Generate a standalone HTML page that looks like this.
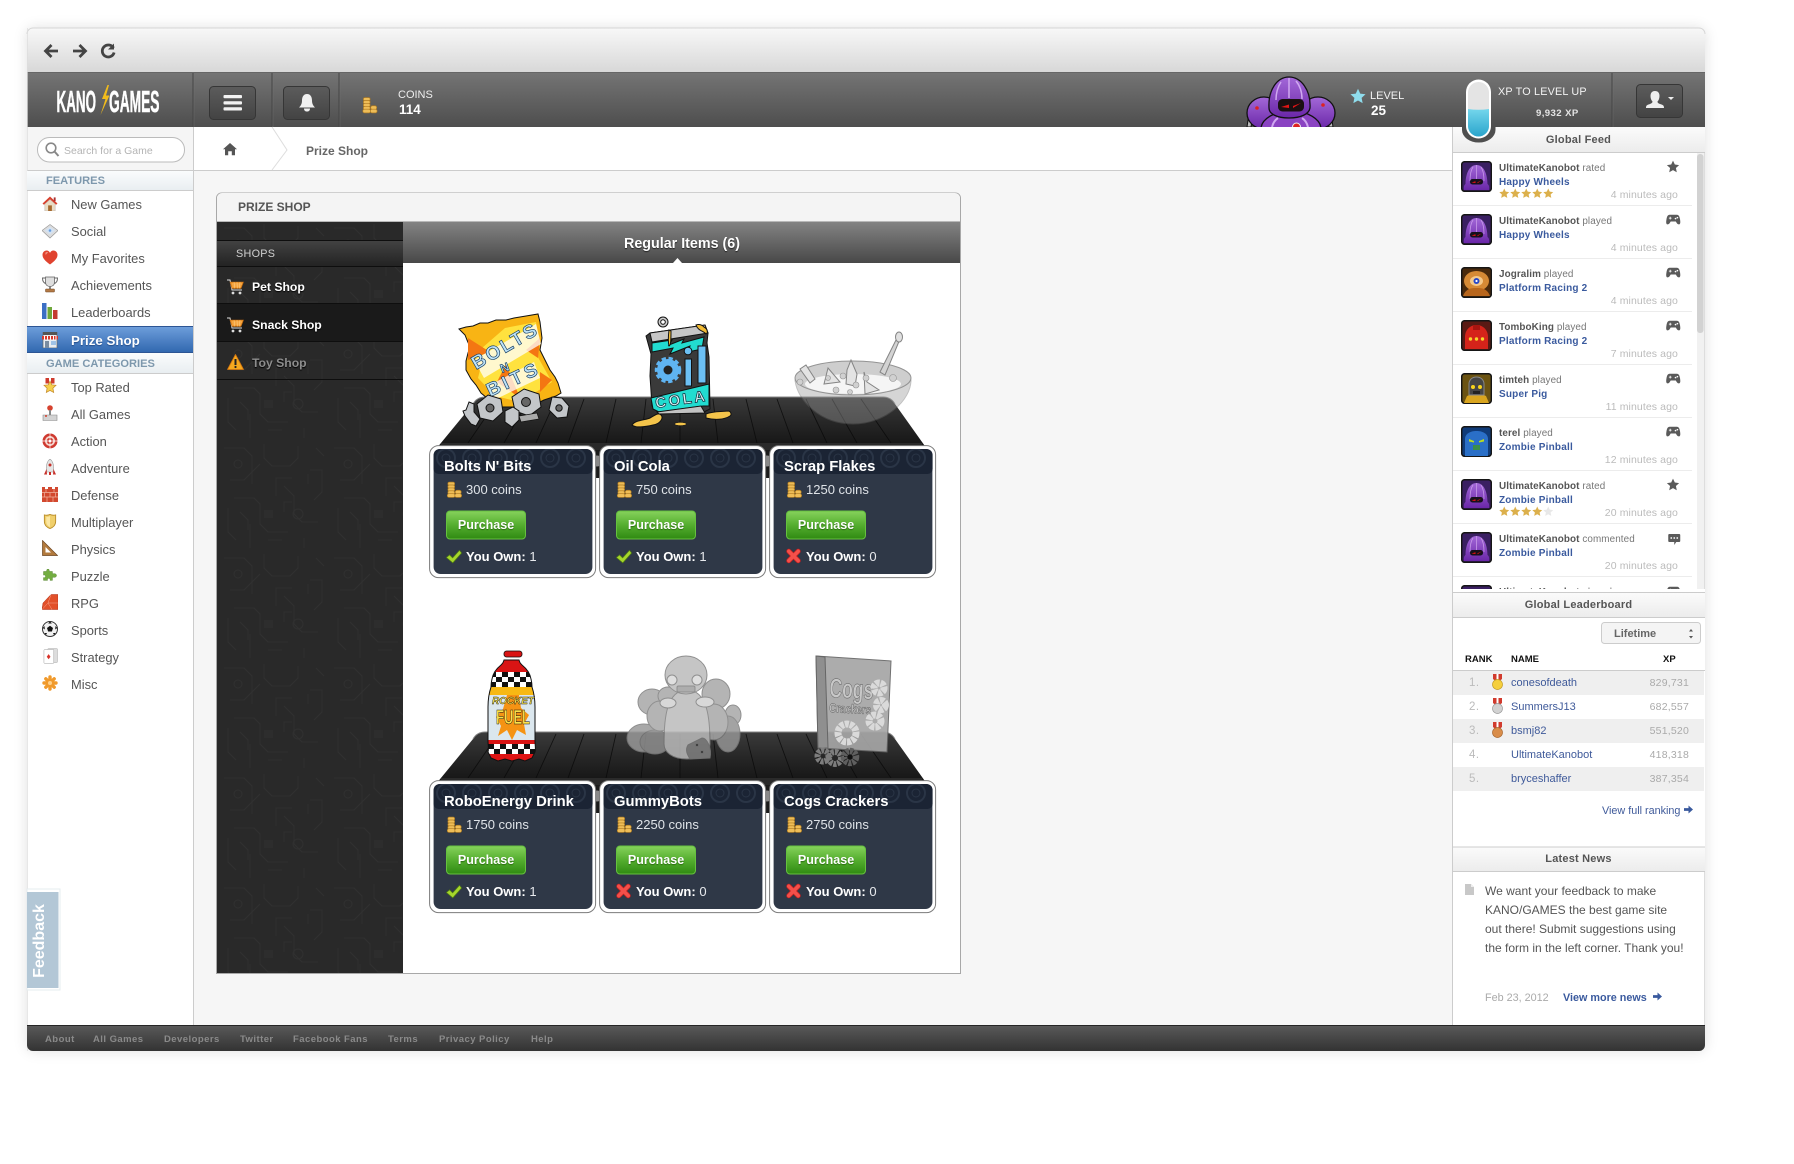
<!DOCTYPE html>
<html><head><meta charset="utf-8"><title>Prize Shop</title>
<style>
html,body{margin:0;padding:0;background:#fff;width:1794px;height:1164px;overflow:hidden}
body{position:relative;font-family:"Liberation Sans",Arial,sans-serif}
#win{position:absolute;left:27px;top:28px;width:1678px;height:1023px;border-radius:7px;box-shadow:0 0 14px rgba(0,0,0,.13)}
svg#g{position:absolute;left:0;top:0}
.t{position:absolute;white-space:nowrap;line-height:20px;font-size:12px;color:#555}
.m{font-size:12.9px;left:71px;color:#555}
.h{font-size:11.1px;font-weight:bold;color:#7e98ad;left:46px}
.w{color:#fff;font-weight:bold}
.s{font-size:12.2px;font-weight:bold;left:252px;color:#fff;text-shadow:0 1px 1px #000}
.ti{font-size:14.8px;font-weight:bold;color:#fff}
.pr{font-size:13px;color:#dfe3e8}
.pu{font-size:12.5px;font-weight:bold;color:#fff;width:80px;text-align:center;text-shadow:0 1px 1px #2a6b10}
.ow{font-size:13px;color:#e8eaee}.ow b{color:#fff}
.f1{font-size:9.9px;left:1499px;color:#777;letter-spacing:.1px}.f1 b{color:#555}
.f2{font-size:10px;left:1499px;font-weight:bold;color:#3a5a9e;letter-spacing:.2px}
.f3{font-size:10.5px;right:116px;color:#bbb;letter-spacing:.1px}
.sh{font-size:11px;font-weight:bold;color:#555;width:253px;left:1452px;text-align:center;letter-spacing:.2px}
.rk{font-size:11.5px;left:1469px;color:#bbb;letter-spacing:.5px}
.nm{font-size:11px;left:1511px;color:#3f5a9a}
.xp{font-size:10.5px;right:105px;color:#aaa;letter-spacing:.2px}
.th{font-size:9.5px;font-weight:bold;color:#111}
.nw{font-size:12px;left:1485px;color:#555}
.ft{font-size:9.5px;font-weight:bold;color:#8a8a8a;letter-spacing:.45px}
</style></head><body>
<div id="win"></div>
<svg id="g" width="1794" height="1164" viewBox="0 0 1794 1164" xmlns="http://www.w3.org/2000/svg">
<defs>
<linearGradient id="gBar" x1="0" y1="0" x2="0" y2="1"><stop offset="0" stop-color="#f8f8f8"/><stop offset="1" stop-color="#d8d8d8"/></linearGradient>
<linearGradient id="gHdr" x1="0" y1="0" x2="0" y2="1"><stop offset="0" stop-color="#747474"/><stop offset="1" stop-color="#4e4e4e"/></linearGradient>
<linearGradient id="gSec" x1="0" y1="0" x2="0" y2="1"><stop offset="0" stop-color="#fbfbfb"/><stop offset="1" stop-color="#ececec"/></linearGradient>
<linearGradient id="gCat" x1="0" y1="0" x2="0" y2="1"><stop offset="0" stop-color="#fafcfd"/><stop offset="1" stop-color="#e9eef1"/></linearGradient>
<linearGradient id="gBlue" x1="0" y1="0" x2="0" y2="1"><stop offset="0" stop-color="#6f9fdc"/><stop offset="1" stop-color="#2f66ae"/></linearGradient>
<linearGradient id="gBtn" x1="0" y1="0" x2="0" y2="1"><stop offset="0" stop-color="#86d25c"/><stop offset=".5" stop-color="#55ae2f"/><stop offset="1" stop-color="#2f8a12"/></linearGradient>
<linearGradient id="gShops" x1="0" y1="0" x2="0" y2="1"><stop offset="0" stop-color="#424242"/><stop offset="1" stop-color="#232323"/></linearGradient>
<linearGradient id="gReg" x1="0" y1="0" x2="0" y2="1"><stop offset="0" stop-color="#838383"/><stop offset="1" stop-color="#484848"/></linearGradient>
<linearGradient id="gShelf" x1="0" y1="0" x2="0" y2="1"><stop offset="0" stop-color="#3b3b3b"/><stop offset=".5" stop-color="#262626"/><stop offset="1" stop-color="#141414"/></linearGradient>
<linearGradient id="gFoot" x1="0" y1="0" x2="0" y2="1"><stop offset="0" stop-color="#5a5a5a"/><stop offset="1" stop-color="#333"/></linearGradient>
<linearGradient id="gBtnD" x1="0" y1="0" x2="0" y2="1"><stop offset="0" stop-color="#5c5c5c"/><stop offset="1" stop-color="#434343"/></linearGradient>
<linearGradient id="gXp" x1="0" y1="0" x2="0" y2="1"><stop offset="0" stop-color="#74d6ec"/><stop offset="1" stop-color="#2aa5cc"/></linearGradient>
<linearGradient id="gPur" x1="0" y1="0" x2="0" y2="1"><stop offset="0" stop-color="#a368d8"/><stop offset="1" stop-color="#6a27a8"/></linearGradient>
<pattern id="circ" width="110" height="110" patternUnits="userSpaceOnUse">
<rect width="110" height="110" fill="#292929"/>
<path d="M4 8h20l8 8v16l-8 8H10M44 4v14l8 8h18l8-8V6M14 58h20l6 6v20l8 8h20M64 46l10 10v18l8 8h16M8 68v24l8 8M30 108V84M56 56V38h16M90 30h12v22l-8 8M40 24l-8 8v12M84 108v-10M96 8l8 8M72 62h-8v10M20 72l8 8v10M48 100h14M88 44v-10" fill="none" stroke="#303030" stroke-width="1"/>
<circle cx="18" cy="24" r="4" fill="none" stroke="#303030"/><circle cx="78" cy="74" r="5" fill="none" stroke="#303030"/><rect x="44" y="70" width="9" height="8" fill="#2d2d2d"/>
</pattern>
<clipPath id="cHead"><rect x="1200" y="60" width="200" height="67"/></clipPath>
<clipPath id="cFeed"><rect x="1452" y="152" width="253" height="437"/></clipPath>
<clipPath id="cBand"><path d="M4.6 10a6 6 0 0 1 6-6h147a6 6 0 0 1 6 6v14a5 5 0 0 1-5 5H9.6a5 5 0 0 1-5-5z"/></clipPath>
<clipPath id="cBot"><path id="botP" d="M504 660c-1 3-1 3-3 5-5 4-8 8-9 14-1 4-1 6-1 8-2 6-3 12-3 20v34c0 4 1 8 0 11l3 6 7 3 7-2 7 2 7-2 6 2 7-3 3-6c1-3 0-7 0-11v-34c0-8-1-14-3-20 0-2 0-4-1-8-1-6-4-10-9-14-2-2-2-2-3-5z"/></clipPath>

<symbol id="star" viewBox="0 0 20 20"><path d="M10 1l2.8 6 6.6.8-4.9 4.5 1.3 6.6L10 15.6 4.2 18.9l1.3-6.6L.6 7.8 7.2 7z"/></symbol>
<symbol id="coin" viewBox="0 0 16 17"><g fill="#eebd58" stroke="#b07a1e" stroke-width=".7"><rect x="1.4" y=".6" width="7" height="3.4" rx="1.7"/><rect x="1.4" y="3.6" width="7" height="3.4" rx="1.7"/><rect x="1.4" y="6.6" width="7" height="3.4" rx="1.7"/><rect x="1.4" y="9.6" width="7" height="3.4" rx="1.7"/><rect x=".8" y="12.6" width="8" height="3.8" rx="1.9"/><rect x="9" y="9" width="6.2" height="3.8" rx="1.9"/><rect x="8.6" y="12.6" width="7" height="3.8" rx="1.9"/></g></symbol>
<symbol id="chk" viewBox="0 0 16 14"><path d="M.4 8l3.200-2.600 3 3L13.500.8l2.100 2.700L6.800 13.400z" fill="#a6d62c" stroke="#4f7d12" stroke-width=".7"/></symbol>
<symbol id="xx" viewBox="0 0 16 16"><path d="M3 3l10 10M13 3L3 13" stroke="#c51f1f" stroke-width="5.400" stroke-linecap="round"/><path d="M3 3l10 10M13 3L3 13" stroke="#f4504a" stroke-width="3.800" stroke-linecap="round"/></symbol>
<symbol id="pad" viewBox="0 0 16 12"><path d="M4 .8h8c2 0 2.900 2 3.400 5s.5 5.200-1 5.500-2.500-1-3.600-3.100H5.200C4.100 10.300 3.100 11.600 1.600 11.300S.1 8.800.6 5.800 2 .8 4 .8z" fill="#5a5a5a"/><path d="M3.200 4.500h3M4.700 3v3" stroke="#fff" stroke-width=".9"/><circle cx="10.500" cy="5" r=".9" fill="#fff"/><circle cx="12.500" cy="4" r=".9" fill="#fff"/></symbol>
<symbol id="bub" viewBox="0 0 12 11"><path d="M1 0h10a1 1 0 0 1 1 1v6a1 1 0 0 1-1 1H8l-2 3V8H1a1 1 0 0 1-1-1V1a1 1 0 0 1 1-1z" fill="#5a5a5a"/><circle cx="3" cy="4" r=".9" fill="#fff"/><circle cx="6" cy="4" r=".9" fill="#fff"/><circle cx="9" cy="4" r=".9" fill="#fff"/></symbol>
<symbol id="arr" viewBox="0 0 10 10"><path d="M0 3.500h5V.5L10 5 5 9.500v-3H0z" fill="#3a5a9e"/></symbol>
<symbol id="cart" viewBox="0 0 17 16"><path d="M0 1h3l2 10h10" fill="none" stroke="#ddd" stroke-width="1"/><path d="M3 3h13.500l-2.500 6.500H5z" fill="#f0962a" stroke="#b9650f" stroke-width=".6"/><path d="M5 5h10M5.500 7h8.500M7 3l.8 6.500M10 3l.3 6.500M13 3l-.6 6.500" stroke="#ffd28a" stroke-width=".5"/><circle cx="6" cy="14" r="1.400" fill="#ddd"/><circle cx="13" cy="14" r="1.400" fill="#ddd"/></symbol>
<symbol id="warn" viewBox="0 0 17 16"><path d="M8.500.5L16.500 15.500H.5z" fill="#f5a81f" stroke="#d9780e" stroke-width=".8" stroke-linejoin="round"/><path d="M8.500 5v6" stroke="#222" stroke-width="2"/><circle cx="8.500" cy="13" r="1.100" fill="#222"/></symbol>

<symbol id="iHome" viewBox="0 0 16 16"><path d="M8 .5L16 8l-1.500 1.300L8 3.500 1.500 9.300 0 8z" fill="#d8402c"/><path d="M2.500 8.500L8 3.800l5.500 4.700V16h-11z" fill="#e9dcc4" stroke="#a99" stroke-width=".4"/><rect x="6" y="10" width="4" height="6" fill="#a5682d"/><rect x="12" y="1.500" width="2" height="4" fill="#a33"/></symbol>
<symbol id="iSoc" viewBox="0 0 16 16"><path d="M8 1.500l8 6L8 15 0 7.500z" fill="#dcdcdc" stroke="#999" stroke-width=".7"/><path d="M8 4l5 3.500L8 11.500 3 7.500z" fill="#d3e2f3"/><circle cx="8" cy="7.500" r="1.300" fill="#6a9fdf"/></symbol>
<symbol id="iHeart" viewBox="0 0 16 16"><path d="M8 15.500C3 11.500 0 9 0 5c0-2.500 2-4.500 4.300-4.500C6 .5 7.300 1.500 8 3c.7-1.500 2-2.500 3.700-2.500C14 .5 16 2.500 16 5c0 4-3 6.500-8 10.500z" fill="#e0432f"/><path d="M3 3c1-1 2.500-1 3 0-1 .2-2 1-2.500 2.500z" fill="#f29a8a"/></symbol>
<symbol id="iTro" viewBox="0 0 16 16"><path d="M3.500.5h9v5c0 3-2 4.500-4.500 4.500S3.500 8.500 3.500 5.500z" fill="#dedede" stroke="#666" stroke-width=".8"/><path d="M3.500 1.500H.5c0 3 1 5 3.500 5.500M12.500 1.500h3c0 3-1 5-3.500 5.500" fill="none" stroke="#666"/><rect x="7" y="10" width="2" height="2.500" fill="#888"/><rect x="3.500" y="12.500" width="9" height="3" rx=".5" fill="#b47a45" stroke="#6d4420" stroke-width=".5"/></symbol>
<symbol id="iBars" viewBox="0 0 16 16"><rect x="0" y="0" width="4.500" height="16" fill="#3c6fc4"/><rect x="5.500" y="4" width="4.500" height="12" fill="#6fa83b"/><rect x="11" y="7" width="4.500" height="9" fill="#c43b30"/></symbol>
<symbol id="iShop" viewBox="0 0 16 16"><rect x="1" y="0" width="14" height="16" fill="#e9edf2" stroke="#666" stroke-width=".7"/><rect x="1" y="0" width="14" height="3" fill="#555"/><path d="M0 4h16v3.500H0z" fill="#d93a2c"/><path d="M2.500 4v3.500M5.500 4v3.500M8.500 4v3.500M11.500 4v3.500M14 4v3.500" stroke="#fff"/><rect x="3" y="9" width="4" height="7" fill="#7a8ca0"/><rect x="9" y="9" width="5" height="4" fill="#9fc2e6"/></symbol>
<symbol id="iMed" viewBox="0 0 16 16"><rect x="3.500" y="0" width="9" height="5.500" fill="#cf3b2c"/><path d="M7 0h2v5H7z" fill="#fff"/><path d="M8 3l1.700 3.800 4.300.5-3.100 2.900.8 4.300L8 12.400 4.300 14.500l.8-4.300L2 7.300l4.300-.5z" fill="#f6cf4c" stroke="#c2872a" stroke-width=".7"/></symbol>
<symbol id="iJoy" viewBox="0 0 16 16"><circle cx="8" cy="3" r="2.800" fill="#d6422f"/><rect x="7" y="5" width="2" height="5" fill="#888"/><path d="M1 10h14v5.500H1z" fill="#d3d3d3" stroke="#888" stroke-width=".6"/><circle cx="4" cy="11" r="1" fill="#d6422f"/></symbol>
<symbol id="iTgt" viewBox="0 0 16 16"><circle cx="8" cy="8" r="7.500" fill="#cf3a30"/><circle cx="8" cy="8" r="5" fill="#f4d8d0"/><circle cx="8" cy="8" r="3.200" fill="#cf3a30"/><circle cx="8" cy="8" r="1.300" fill="#fff"/><path d="M8 0v16M0 8h16" stroke="#fff" stroke-width=".7"/></symbol>
<symbol id="iRkt" viewBox="0 0 16 16"><path d="M8 0c2.500 2 3.500 5 3.500 8v5h-7V8C4.500 5 5.500 2 8 0z" fill="#e6e6e6" stroke="#999" stroke-width=".6"/><circle cx="8" cy="6" r="1.500" fill="#c8312a"/><path d="M4.500 10L2 15.500h3zM11.500 10l2.500 5.500h-3zM7 13h2v3H7z" fill="#c8312a"/></symbol>
<symbol id="iBrk" viewBox="0 0 16 16"><path d="M0 0h3v2h3V0h4v2h3V0h3v15H0z" fill="#d2492f"/><path d="M0 5.500h16M0 10h16M4 2v3.500M12 2v3.500M8 5.500V10M2.500 5.500V10M13.500 5.500V10M5 10v5M11 10v5" stroke="#f1b39e" stroke-width=".7"/></symbol>
<symbol id="iShd" viewBox="0 0 16 16"><path d="M2 1c2 .5 4 .5 6-.5 2 1 4 1 6 .5v7c0 4-3 6.500-6 7.500-3-1-6-3.500-6-7.500z" fill="#f0cf6b" stroke="#bb8f2c"/><path d="M8 2v12c-2-1-4-3-4-6V3c1.500.2 3 0 4-1z" fill="#fbe7a3"/></symbol>
<symbol id="iTri" viewBox="0 0 16 16"><path d="M.5.500L15.500 15.500H.5z" fill="#b27a3d" stroke="#6d4520" stroke-width=".7"/><path d="M3.500 7l5.500 5.500H3.500z" fill="#fff"/></symbol>
<symbol id="iPuz" viewBox="0 0 16 16"><path d="M0 3h4c-.5-2 .5-3 1.500-3S7.500 1 7 3h4v3c2-.5 5-.5 5 2s-3 2.500-5 2v4H8c.5-2-.5-2.500-1.500-2.500S4.500 12 5 14H0v-3.500c1.500.5 2.500 0 2.500-1.500S1.500 7 0 7.500z" fill="#73ad41" stroke="#4c7a26" stroke-width=".5"/></symbol>
<symbol id="iGem" viewBox="0 0 16 16"><path d="M1 9L9 .5h7V15.500H0z" fill="#e2502a" stroke="#a92a12" stroke-width=".5"/><path d="M9 .5L6 9h10M6 9l-6 6.500M6 9l4 6.500" stroke="#f5a38b" stroke-width=".5" fill="none"/></symbol>
<symbol id="iBall" viewBox="0 0 16 16"><circle cx="8" cy="8" r="7.500" fill="#f1f1f1" stroke="#333"/><path d="M8 4.800l3 2.200-1.100 3.500H6.100L5 7z" fill="#111"/><path d="M8 .5L6.200 2.500h3.600zM.8 7l2 1.500L2.500 5zM15.200 7l-2 1.500.3-3.500zM4 14l1-2H2.500zM12 14l-1-2h2.500z" fill="#111"/></symbol>
<symbol id="iCrd" viewBox="0 0 16 16"><rect x="5" y="0" width="10.500" height="15" rx="1" fill="#ddd" stroke="#aaa" stroke-width=".5"/><rect x="1" y="1" width="10.500" height="15" rx="1" fill="#fff" stroke="#999" stroke-width=".5"/><path d="M6 6l2 2.800L6 11.500 4 8.800z" fill="#d8332a"/></symbol>
<symbol id="iMisc" viewBox="0 0 16 16"><g stroke="#f09a2c" stroke-width="3.400" stroke-linecap="round"><path d="M8 2v12M2 8h12M3.800 3.800l8.400 8.400M12.200 3.800l-8.400 8.400"/></g><circle cx="8" cy="8" r="2" fill="#ffd08a"/></symbol>

<symbol id="aP" viewBox="0 0 31 31"><rect x=".7" y=".7" width="29.600" height="29.600" rx="3" fill="#3a1f62" stroke="#161616" stroke-width="1.500"/><path d="M3 29c-.5-3 0-5 1.500-6 .3-11 4-19 11-19s10.700 8 11 19c1.500 1 2 3 1.500 6z" fill="url(#gPur)"/><path d="M12 6c-2 3-3 9-3 14M15.500 4v15M20 6c2 3 3 9 3 14" stroke="#c79ae8" fill="none" stroke-width=".8"/><rect x="9" y="18" width="13" height="5.500" rx="2.500" fill="#16101c"/><path d="M10.500 21.500l4-1.300v1.800zM20.500 19.500l-4 1.800 0 1z" fill="#e11"/></symbol>
<symbol id="aO" viewBox="0 0 31 31"><rect x=".7" y=".7" width="29.600" height="29.600" rx="3" fill="#4a2a0c" stroke="#161616" stroke-width="1.500"/><ellipse cx="15.500" cy="14" rx="12.500" ry="10" fill="#d68a35"/><path d="M2 29c3-8 9-8 13.500-8S26 21 29 29z" fill="#b8661c"/><ellipse cx="15.500" cy="14" rx="6.500" ry="5" fill="#f5c98a"/><circle cx="15.500" cy="14" r="3" fill="#2748c9"/><circle cx="15.500" cy="14" r="1.100" fill="#fff"/></symbol>
<symbol id="aR" viewBox="0 0 31 31"><rect x=".7" y=".7" width="29.600" height="29.600" rx="3" fill="#5a1a14" stroke="#161616" stroke-width="1.500"/><path d="M4 29V17c0-7 5-12 11.500-12S27 10 27 17v12z" fill="#d5231a"/><path d="M12 5h7v5h-7z" fill="#a81510"/><circle cx="9.500" cy="19" r="1.700" fill="#f5d52a"/><circle cx="15.500" cy="19" r="1.700" fill="#f5d52a"/><circle cx="21.500" cy="19" r="1.700" fill="#f5d52a"/></symbol>
<symbol id="aY" viewBox="0 0 31 31"><rect x=".7" y=".7" width="29.600" height="29.600" rx="3" fill="#6b5312" stroke="#161616" stroke-width="1.500"/><path d="M3 30l3-7 5-2h9l5 2 3 7z" fill="#d9a51f"/><path d="M8 22V11c0-4 3-7 7.500-7S23 7 23 11v11z" fill="#454545" stroke="#888"/><circle cx="12" cy="14" r="2" fill="#f7d31d"/><circle cx="19" cy="14" r="2" fill="#f7d31d"/><rect x="12" y="18" width="7" height="3" fill="#222"/></symbol>
<symbol id="aB" viewBox="0 0 31 31"><rect x=".7" y=".7" width="29.600" height="29.600" rx="3" fill="#103b78" stroke="#161616" stroke-width="1.500"/><path d="M4 30V13c0-5 5-8 11.500-8S27 8 27 13v17z" fill="#2a6fc7"/><path d="M8 13l5 2v1.500l-5-1zM23 13l-5 2v1.500l5-1z" fill="#b9dd1f"/><rect x="12" y="19" width="7" height="5" fill="#3b8f49"/></symbol>
<symbol id="mG" viewBox="0 0 11 16"><path d="M1 0h9v5l-3 2.500H4L1 5z" fill="#d13b2e"/><path d="M4.500 0h2v7h-2z" fill="#fff"/><circle cx="5.500" cy="10.500" r="5" fill="#f5cf3c" stroke="#c29a1f" stroke-width=".7"/></symbol>
<symbol id="mS" viewBox="0 0 11 16"><path d="M1 0h9v5l-3 2.500H4L1 5z" fill="#d13b2e"/><path d="M4.500 0h2v7h-2z" fill="#fff"/><circle cx="5.500" cy="10.500" r="5" fill="#d2d2d2" stroke="#999" stroke-width=".7"/></symbol>
<symbol id="mB" viewBox="0 0 11 16"><path d="M1 0h9v5l-3 2.500H4L1 5z" fill="#d13b2e"/><path d="M4.500 0h2v7h-2z" fill="#fff"/><circle cx="5.500" cy="10.500" r="5" fill="#d98d4a" stroke="#a8642a" stroke-width=".7"/></symbol>

<g id="shelf">
<path d="M485 397H883q8 0 12 7L927 449H436L473 404q4-7 12-7z" fill="url(#gShelf)"/>
<path d="M473 404q4-7 12-7H883q8 0 12 7" fill="none" stroke="#858585"/>
<g stroke="#0a0a0a" stroke-width=".9" opacity=".8"><path d="M498 399L468 443M529 399L504 443M556 399L536 443M584 399L568 443M616 399L606 443M646 399L641 443M680 399V443M713 399L718 443M746 399L757 443M777 399L793 443M806 399L827 443M832 399L857 443M861 399L891 443"/></g>
<rect x="441" y="443" width="481" height="8" fill="#2a2a2a"/>
<rect x="592" y="450" width="11" height="28" fill="#1c1c1c"/><rect x="762" y="450" width="11" height="28" fill="#1c1c1c"/>
<circle cx="597" cy="461" r="5.500" fill="#8a8a8a"/><circle cx="767" cy="461" r="5.500" fill="#8a8a8a"/>
</g>
<g id="card">
<rect x=".6" y=".6" width="166" height="132" rx="9" fill="#fff" stroke="#7c7c7c"/>
<rect x="4.600" y="4" width="158.800" height="125" rx="7" fill="#2f3847"/>
<g clip-path="url(#cBand)"><rect x="4" y="4" width="161" height="26" fill="#1b2434"/>
<g fill="none" stroke="#2a3546" stroke-width="2"><circle cx="17" cy="13" r="9"/><circle cx="43" cy="13" r="9"/><circle cx="69" cy="13" r="9"/><circle cx="95" cy="13" r="9"/><circle cx="121" cy="13" r="9"/><circle cx="147" cy="13" r="9"/></g>
<g fill="none" stroke="#2a3546"><circle cx="17" cy="13" r="4"/><circle cx="43" cy="13" r="4"/><circle cx="69" cy="13" r="4"/><circle cx="95" cy="13" r="4"/><circle cx="121" cy="13" r="4"/><circle cx="147" cy="13" r="4"/></g></g>
<use href="#coin" x="17.500" y="36.500" width="15.500" height="16.500"/>
<rect x="17.500" y="66" width="79" height="28" rx="3.500" fill="url(#gBtn)" stroke="#66c13f"/>
</g>
</defs>

<!-- browser chrome -->
<path d="M27 72V34a6 6 0 0 1 6-6H1699a6 6 0 0 1 6 6V72z" fill="url(#gBar)"/>
<path d="M27 34a6 6 0 0 1 6-6H1699a6 6 0 0 1 6 6" fill="none" stroke="#d6d6d6"/>
<rect x="27" y="72" width="1678" height="1.200" fill="#666"/>
<g fill="none" stroke="#444" stroke-width="2.800">
<path d="M58 51H46M51.500 45L45.500 51l6 6"/><path d="M73 51h12M79.500 45l6 6-6 6"/><path d="M113.500 48a6 6 0 1 0 .6 4.500"/></g>
<path d="M114 43.500v6h-6z" fill="#444"/>
<rect x="27" y="73" width="1678" height="54" fill="url(#gHdr)"/>
<g stroke="#454545"><path d="M193 73v54M272 73v54M339 73v54M1612 73v54"/></g>
<g stroke="#7a7a7a" opacity=".3"><path d="M194 73v54M273 73v54M340 73v54M1613 73v54"/></g>
<!-- logo -->
<g font-family="'Liberation Sans',sans-serif" font-weight="bold" fill="#fff" stroke="#fff" stroke-width=".55" font-size="31">
<text x="56.500" y="112" textLength="39.500" lengthAdjust="spacingAndGlyphs">KANO</text>
<text x="109" y="112" textLength="50.500" lengthAdjust="spacingAndGlyphs">GAMES</text></g>
<path d="M107.500 85l-5.500 14h3.500l-5 16 9-19.500h-3.500l3-10.500z" fill="#f2bc1b"/>
<!-- header buttons -->
<rect x="209.500" y="86.500" width="46" height="33" rx="4" fill="url(#gBtnD)" stroke="#363636"/>
<rect x="223.500" y="95" width="18.500" height="3.200" rx="1" fill="#f2f2f2"/><rect x="223.500" y="101.300" width="18.500" height="3.200" rx="1" fill="#f2f2f2"/><rect x="223.500" y="107.300" width="18.500" height="3.200" rx="1" fill="#f2f2f2"/>
<rect x="283.500" y="86.500" width="46" height="33" rx="4" fill="url(#gBtnD)" stroke="#363636"/>
<path d="M307 94c3.500 0 5 3 5 6.500 0 3 1 5 3 7H299c2-2 3-4 3-7 0-3.500 1.500-6.500 5-6.500z" fill="#f0f0f0"/><path d="M304 108.500h6c0 2-1.200 3-3 3s-3-1-3-3z" fill="#f0f0f0"/>
<use href="#coin" x="362" y="97" width="15.500" height="16.500"/>
<!-- robot -->
<g clip-path="url(#cHead)">
<path d="M1247 127l3-20 4 0-3 20zM1333 127l-3-20-4 0 3 20z" fill="#bbb" stroke="#111"/>
<ellipse cx="1264" cy="113" rx="17" ry="16" fill="url(#gPur)" stroke="#111" stroke-width="1.300"/>
<ellipse cx="1318" cy="113" rx="17" ry="16" fill="url(#gPur)" stroke="#111" stroke-width="1.300"/>
<ellipse cx="1291" cy="129" rx="30" ry="18" fill="#8a43c2" stroke="#111" stroke-width="1.300"/>
<path d="M1269 108c-1-18 8-31 20-31s22 13 21 31c-1 6-9 10-21 10s-20-4-20-10z" fill="url(#gPur)" stroke="#111" stroke-width="1.300"/>
<path d="M1281 82c-4 6-5 13-5 18M1296 81c5 6 6 13 6 18M1289 78v20" stroke="#cfa8f0" stroke-width="1.500" fill="none"/>
<rect x="1278" y="99" width="26" height="12.500" rx="4.500" fill="#1a1012"/>
<path d="M1281 107l8-2.500v3.500zM1301 103l-8 3 0 2z" fill="#e31414"/>
<circle cx="1257" cy="108" r="1.800" fill="#d22"/><circle cx="1323" cy="105" r="1.800" fill="#d22"/>
<path d="M1272 127c1-4 3-7 6-9M1308 127c-1-4-3-7-6-9" stroke="#cfa8f0" stroke-width="2" fill="none"/>
<circle cx="1296.500" cy="127" r="4" fill="#d22" stroke="#eee"/>
</g>
<use href="#star" x="1350" y="88" width="16" height="16" fill="#8fdcec"/>
<!-- user button -->
<rect x="1636.500" y="84.500" width="46" height="33" rx="4" fill="url(#gBtnD)" stroke="#363636"/>
<path d="M1655 91c3 0 4.500 2 4.500 5 0 2.500-1 4.500-2 5.500 0 1.500 1 2 4 3 2 .8 2.500 1.500 2.500 3.500h-18c0-2 .5-2.700 2.500-3.500 3-1 4-1.500 4-3-1-1-2-3-2-5.500 0-3 1.500-5 4.500-5z" fill="#efefef"/>
<path d="M1668 97h6l-3 3z" fill="#efefef"/>

<!-- body -->
<rect x="27" y="127" width="1678" height="898" fill="#fff"/>
<rect x="194" y="171" width="1258" height="854" fill="#f6f6f6"/>
<!-- sidebar -->
<rect x="27" y="127" width="166" height="43" fill="#f5f5f5"/>
<rect x="27" y="170" width="1425" height="1" fill="#ccc"/>
<rect x="193" y="127" width="1" height="898" fill="#ccc"/>
<rect x="27" y="28" width="1" height="1023" fill="#ddd" opacity=".7"/>
<path d="M272 127l15 23-15 20" fill="#fff" stroke="#ddd"/>
<rect x="37.500" y="137.500" width="147" height="24.500" rx="12" fill="#fff" stroke="#bbb"/>
<circle cx="51" cy="148" r="4.800" fill="none" stroke="#888" stroke-width="1.600"/><path d="M54.500 151.500l4 4.500" stroke="#888" stroke-width="2"/>
<path d="M230 143l7 6.200h-2v6h-3.200v-4h-3.600v4H225v-6h-2z" fill="#555"/>
<rect x="27" y="171" width="166" height="19" fill="url(#gCat)"/><rect x="27" y="190" width="166" height="1" fill="#ccc"/>
<rect x="27" y="326" width="166" height="27" fill="url(#gBlue)"/><rect x="27" y="326" width="166" height="1" fill="#2c5594"/><rect x="27" y="352" width="166" height="1" fill="#2c5594"/>
<rect x="27" y="353" width="166" height="20" fill="url(#gCat)"/><rect x="27" y="373" width="166" height="1" fill="#ccc"/>
<use href="#iHome" x="42" y="196" width="16" height="15"/><use href="#iSoc" x="42" y="223" width="16" height="16"/><use href="#iHeart" x="42" y="250" width="16" height="15"/><use href="#iTro" x="42" y="276" width="16" height="17"/><use href="#iBars" x="42" y="303" width="16" height="16"/><use href="#iShop" x="42" y="332" width="16" height="16"/>
<use href="#iMed" x="42" y="378" width="16" height="16"/><use href="#iJoy" x="42" y="405" width="16" height="16"/><use href="#iTgt" x="42" y="433" width="16" height="16"/><use href="#iRkt" x="42" y="459" width="16" height="16"/><use href="#iBrk" x="42" y="487" width="16" height="16"/><use href="#iShd" x="42" y="514" width="16" height="15"/><use href="#iTri" x="42" y="540" width="16" height="16"/><use href="#iPuz" x="42" y="569" width="16" height="13"/><use href="#iGem" x="42" y="594" width="16" height="16"/><use href="#iBall" x="42" y="621" width="16" height="16"/><use href="#iCrd" x="43" y="648" width="15" height="16"/><use href="#iMisc" x="42" y="675" width="16" height="16"/>
<!-- feedback tab -->
<rect x="27" y="889" width="33" height="101" fill="#fff" stroke="#e6ecef"/><rect x="27" y="892" width="31.500" height="96" fill="#b3c7d6"/>
<!-- panel -->
<path d="M216.500 973.500V198a5 5 0 0 1 5-5H955.500a5 5 0 0 1 5 5V973.500z" fill="#fff" stroke="#a8a8a8"/>
<path d="M217 221V198a5 5 0 0 1 5-5H955a5 5 0 0 1 5 5V221z" fill="#f4f4f4"/>
<rect x="217" y="221" width="743" height="1.200" fill="#b8b8b8"/>
<rect x="403" y="222" width="557" height="41" fill="url(#gReg)"/>
<path d="M673 263l4.500-5 4.500 5z" fill="#fff"/>
<rect x="217" y="222" width="186" height="751" fill="url(#circ)"/>
<rect x="217" y="241" width="186" height="25" fill="url(#gShops)"/>
<rect x="217" y="304" width="186" height="37" fill="#1a1a1a"/>
<g fill="#0e0e0e"><rect x="217" y="240" width="186" height="1"/><rect x="217" y="266" width="186" height="1"/><rect x="217" y="303" width="186" height="1"/><rect x="217" y="341" width="186" height="1"/><rect x="217" y="379" width="186" height="1"/></g>
<use href="#cart" x="227" y="279" width="17" height="16"/><use href="#cart" x="227" y="317" width="17" height="16"/><use href="#warn" x="227" y="354" width="17" height="16"/>

<!-- shelves -->
<use href="#shelf"/>
<use href="#shelf" y="335"/>
<g transform="translate(429 445)"><use href="#card"/><use href="#chk" x="17" y="104.500" width="16" height="14"/></g>
<g transform="translate(599 445)"><use href="#card"/><use href="#chk" x="17" y="104.500" width="16" height="14"/></g>
<g transform="translate(769 445)"><use href="#card"/><use href="#xx" x="17" y="103.500" width="15" height="15"/></g>
<g transform="translate(429 780)"><use href="#card"/><use href="#chk" x="17" y="104.500" width="16" height="14"/></g>
<g transform="translate(599 780)"><use href="#card"/><use href="#xx" x="17" y="103.500" width="15" height="15"/></g>
<g transform="translate(769 780)"><use href="#card"/><use href="#xx" x="17" y="103.500" width="15" height="15"/></g>

<!-- Bolts bag -->
<g stroke="#111" stroke-width="1">
<path d="M459 329L466 327 473 326 480 323 488 323 496 320 506 320 514 318 526 316 538 314 540 322 541 330 542 338 540 350 543 356 547 364 550 370 555 377 558 383 561 393 556 396 550 398 544 400 538 403 528 406 516 407 502 407 494 404 487 398 481 393 476 385 471 379 466 370 466 361 468 353 470 347 467 340 465 335z" fill="#f8b414"/>
<path d="M474 355L505 328 536 322 540 345 535 352 552 382 520 402 495 396 478 378 481 366z" fill="#ffe23e" stroke="none"/>
<path d="M468 338l22 14-22 8zM497 382l9-18 14 34zM526 350l14-12-2 20zM540 372l12 8-12 12z" fill="#f47612" stroke="none"/>
<path d="M474 360L536 324 541 344 484 378zM488 386l46-24 6 16-46 22z" fill="#fff" stroke="none" opacity=".75"/>
<g font-family="'Liberation Sans',sans-serif" font-weight="bold" fill="#bfe4f8" stroke="#1a4268" stroke-width=".7">
<text x="476" y="370" font-size="19" transform="rotate(-30 476 370)" textLength="72" lengthAdjust="spacing">BOLTS</text>
<text x="502" y="373" font-size="12" transform="rotate(-20 502 373)">N</text>
<text x="490" y="397" font-size="19" transform="rotate(-25 490 397)" textLength="54" lengthAdjust="spacing">BITS</text></g>
<g fill="#c3c6c9"><path d="M469 402l5 2 0 8 6 7-4 7-5-2-6-8-2-5 3-1z"/>
<path d="M488 395l13 4 2 13-10 9-13-3-3-14z"/><circle cx="490" cy="408" r="4" fill="#666"/>
<path d="M524 389l15 5 2 13-12 9-14-5-3-14z"/><circle cx="526" cy="402" r="4.500" fill="#666"/>
<path d="M552 397l10 1 7 8-2 11-10 1-8-8z"/><circle cx="559" cy="408" r="3.200" fill="#666"/>
<path d="M505 411l8-4 6 4 0 9-7 7-7-5z"/></g>
</g>
<path d="M519 416l18-3 2 6-18 3z" fill="#aaa" stroke="#111" stroke-width=".7"/>

<!-- Oil can -->
<g stroke="#111" stroke-width="1">
<path d="M632 425c3-5 14-5 18-7 4-2 8-6 11-3 3 3-1 9-8 10-8 2-18 3-21 0zM706 414c8-3 14-2 22-3 3 0 4 4 2 5-6 4-16 4-24 2z" fill="#f4c44a"/>
<ellipse cx="680.500" cy="424" rx="6" ry="1.600" fill="#f4c44a" stroke-width=".5"/>
<path d="M646 336l4-3 55-8 3 8-1 10 2 14 1 52-8 4-44-2-6-5-2-30 1-22z" fill="#3a3a3a"/>
<path d="M650 333l55-8 3 8-56 9z" fill="#c6c6c6"/>
<path d="M652 343l20-3-3 5 15-6-2 4 22-6-2 12-14 3 2-6-20 8 3-6-21 4z" fill="#22dcd0"/>
<path d="M651 398l58-14v22l-6 0-44 6-6-3z" fill="#22dcd0"/>
<path d="M657 412l44-6 4 7-46 1z" fill="#c2c2c2"/>
<circle cx="668" cy="370" r="11" fill="#5fb4f2" stroke-dasharray="4 2.500" stroke-width="4.500" stroke="#5fb4f2"/><circle cx="668" cy="370" r="4.500" fill="#222" stroke="none"/>
<rect x="685" y="359" width="6.500" height="27" fill="#6cc0f4"/><circle cx="688" cy="351" r="3.800" fill="#6cc0f4"/>
<rect x="698" y="346" width="8" height="37" fill="#6cc0f4"/>
<circle cx="663" cy="322" r="5" fill="#ccc"/><circle cx="663" cy="322" r="2.300" fill="#fff"/>
<path d="M669 330c-1 8-1 12 0 16 2 0 2-8 2-15zM696 325c2 6 8 6 10 9 2-1 2-5-2-7-2-2-5-3-8-2z" fill="#f2bb34"/>
<text x="656" y="408" font-family="'Liberation Sans',sans-serif" font-weight="bold" font-size="15" fill="#d6f6f8" stroke="#123" stroke-width=".7" transform="rotate(-8 656 408)" textLength="50" lengthAdjust="spacing">COLA</text>
</g>

<!-- Bowl -->
<g opacity=".9">
<path d="M795 380c2 20 25 44 58 44s58-24 58-44z" fill="#9a9a9a" opacity=".45" stroke="#666"/>
<ellipse cx="853" cy="378" rx="58" ry="17" fill="#c9c9c9" stroke="#888"/>
<ellipse cx="853" cy="384" rx="48" ry="10" fill="#f5f5f5"/>
<path d="M880 372l17-34 3 1-15 36z" fill="#cfcfcf" stroke="#777"/><ellipse cx="899" cy="337" rx="3.500" ry="5" fill="#ddd" stroke="#777"/>
<path d="M806 365l9 14-5 4-10-14zM828 368l12 14-16 2zM851 360l6 14-2 12-9-2 1-14zM867 382l12 8-14 4-1-22z" fill="#e0e0e0" stroke="#777"/>
<g fill="#ccc" stroke="#888" stroke-width=".6"><circle cx="843" cy="376" r="3"/><circle cx="856" cy="385" r="3"/><circle cx="866" cy="378" r="3"/><circle cx="836" cy="390" r="3"/><circle cx="800" cy="382" r="3"/><circle cx="893" cy="378" r="3.500"/><circle cx="828" cy="378" r="2.500"/><circle cx="850" cy="392" r="2.500"/></g>
</g>

<!-- Rocket fuel bottle -->
<rect x="504" y="651" width="18" height="6" rx="2.500" fill="#d91414" stroke="#111" stroke-width=".8"/>
<g clip-path="url(#cBot)">
<rect x="486" y="655" width="54" height="110" fill="#dbe7ee"/>
<rect x="486" y="655" width="54" height="17" fill="#d91414"/>
<rect x="486" y="672" width="54" height="15" fill="#fff"/>
<path d="M490 672h6v5h-6zM502 672h6v5h-6zM514 672h6v5h-6zM526 672h6v5h-6zM496 677h6v5h-6zM508 677h6v5h-6zM520 677h6v5h-6zM490 682h6v5h-6zM502 682h6v5h-6zM514 682h6v5h-6zM526 682h6v5h-6z" fill="#111"/>
<rect x="486" y="687" width="54" height="8" fill="#f7b813"/>
<path d="M507 695l-4 14-7 8 5 9-3 10 9-6 5 10 5-10 9 5-2-11 5-9-8-7-2-13z" fill="#f59313"/>
<rect x="486" y="740" width="54" height="4" fill="#d91414"/>
<rect x="486" y="744" width="54" height="10" fill="#fff"/>
<path d="M488 744h6v5h-6zM500 744h6v5h-6zM512 744h6v5h-6zM524 744h6v5h-6zM494 749h6v5h-6zM506 749h6v5h-6zM518 749h6v5h-6zM530 749h6v5h-6z" fill="#111"/>
<rect x="486" y="754" width="54" height="10" fill="#e01414"/>
</g>
<use href="#botP" fill="none" stroke="#111" stroke-width="1"/>
<text x="492" y="704" font-family="'Liberation Sans',sans-serif" font-weight="bold" font-style="italic" font-size="10" fill="#f9e24a" stroke="#111" stroke-width=".4" textLength="42" lengthAdjust="spacingAndGlyphs">ROCKET</text>
<text x="496" y="724" font-family="'Liberation Sans',sans-serif" font-weight="bold" font-size="20" fill="#fbe14a" stroke="#111" stroke-width=".5" textLength="34" lengthAdjust="spacingAndGlyphs">FUEL</text>

<!-- Gummy bots -->
<g opacity=".85" fill="#a8a8a8" stroke="#7c7c7c">
<ellipse cx="644" cy="738" rx="17" ry="14" fill="#999"/><ellipse cx="655" cy="742" rx="15" ry="12" fill="#8f8f8f"/>
<ellipse cx="652" cy="702" rx="14" ry="13"/><ellipse cx="660" cy="716" rx="13" ry="15"/><ellipse cx="668" cy="696" rx="10" ry="9"/>
<ellipse cx="716" cy="694" rx="14" ry="15"/><ellipse cx="733" cy="715" rx="8" ry="10"/><ellipse cx="728" cy="734" rx="12" ry="18" fill="#949494"/><ellipse cx="714" cy="722" rx="14" ry="18"/>
<path d="M664 744c0-24 2-54 23-54s23 30 23 54c0 8-8 15-23 15s-23-7-23-15z" fill="#bcbcbc"/>
<ellipse cx="686" cy="675" rx="21" ry="19" fill="#bcbcbc"/>
<ellipse cx="672" cy="680" rx="5" ry="5" fill="#dadada"/><ellipse cx="697" cy="680" rx="5" ry="5" fill="#dadada"/>
<rect x="677" y="686" width="18" height="6" rx="1.500" fill="#9f9f9f"/>
<ellipse cx="705" cy="702" rx="9" ry="5" fill="#d2d2d2"/><ellipse cx="668" cy="703" rx="8" ry="5" fill="#d2d2d2"/>
<path d="M688 745l14-7c5 0 10 10 8 20l-20 1c-3-5-5-9-2-14z" fill="#828282"/><circle cx="697" cy="745" r="1.500" fill="#333"/><circle cx="702" cy="752" r="1.500" fill="#333"/>
</g>

<!-- Cogs crackers -->
<g>
<path d="M816 656l75 5-4 91-69-4z" fill="#a6a6a6" stroke="#666" opacity=".92"/>
<path d="M816 656l9 1 3 91-10 0z" fill="#8f8f8f" stroke="#666"/>
<g font-family="'Liberation Sans',sans-serif" font-weight="bold" fill="#c8c8c8" stroke="#6a6a6a" stroke-width=".6">
<text x="829" y="697" font-size="27" textLength="44" lengthAdjust="spacingAndGlyphs" transform="rotate(3 829 697)">Cogs</text>
<text x="829" y="712" font-size="12.500" textLength="42" lengthAdjust="spacingAndGlyphs" transform="rotate(3 829 712)">Crackers</text></g>
<g fill="none" stroke="#dadada" stroke-width="7" stroke-dasharray="4 1"><circle cx="847" cy="733" r="9"/><circle cx="875" cy="721" r="6"/><circle cx="881" cy="705" r="4.500"/><circle cx="879" cy="688" r="5"/></g>
<g fill="none" stroke="#7d7d7d" stroke-width="6" stroke-dasharray="3 1"><circle cx="823" cy="756" r="5.500"/><circle cx="835" cy="758" r="6"/></g>
<circle cx="850" cy="757" r="6" fill="none" stroke="#5f5f5f" stroke-width="6.500" stroke-dasharray="3 1"/>
<circle cx="850" cy="757" r="2.500" fill="#111"/>
</g>

<!-- right column -->
<rect x="1452" y="127" width="253" height="898" fill="#fff"/>
<rect x="1452" y="127" width="1" height="898" fill="#ccc"/>
<rect x="1704" y="127" width="1" height="898" fill="#ddd"/>
<rect x="1453" y="127" width="252" height="25" fill="url(#gSec)"/><rect x="1453" y="152" width="252" height="1" fill="#ccc"/>
<rect x="1697" y="153" width="7" height="436" fill="#f1f1f1"/><rect x="1697" y="154" width="6.500" height="179" rx="3" fill="#d2d2d2"/>
<g fill="#ececec"><rect x="1453" y="205" width="239" height="1"/><rect x="1453" y="258" width="239" height="1"/><rect x="1453" y="311" width="239" height="1"/><rect x="1453" y="364" width="239" height="1"/><rect x="1453" y="417" width="239" height="1"/><rect x="1453" y="470" width="239" height="1"/><rect x="1453" y="523" width="239" height="1"/><rect x="1453" y="576" width="239" height="1"/></g>
<use href="#aP" x="1461" y="161" width="31" height="31"/><use href="#aP" x="1461" y="214" width="31" height="31"/><use href="#aO" x="1461" y="267" width="31" height="31"/><use href="#aR" x="1461" y="320" width="31" height="31"/><use href="#aY" x="1461" y="373" width="31" height="31"/><use href="#aB" x="1461" y="426" width="31" height="31"/><use href="#aP" x="1461" y="479" width="31" height="31"/><use href="#aP" x="1461" y="532" width="31" height="31"/>
<g clip-path="url(#cFeed)"><use href="#aP" x="1461" y="585" width="31" height="31"/><use href="#pad" x="1666" y="586" width="15" height="11"/></g>
<g fill="#5a5a5a"><use href="#star" x="1666.500" y="160" width="13" height="13"/><use href="#star" x="1666.500" y="478" width="13" height="13"/></g>
<use href="#pad" x="1665.500" y="214" width="15.500" height="11"/><use href="#pad" x="1665.500" y="267" width="15.500" height="11"/><use href="#pad" x="1665.500" y="320" width="15.500" height="11"/><use href="#pad" x="1665.500" y="373" width="15.500" height="11"/><use href="#pad" x="1665.500" y="426" width="15.500" height="11"/>
<use href="#bub" x="1668" y="534" width="12.500" height="11"/>
<g fill="#dcb04c"><use href="#star" x="1499" y="188" width="10.500" height="10.500"/><use href="#star" x="1510" y="188" width="10.500" height="10.500"/><use href="#star" x="1521" y="188" width="10.500" height="10.500"/><use href="#star" x="1532" y="188" width="10.500" height="10.500"/><use href="#star" x="1543" y="188" width="10.500" height="10.500"/>
<use href="#star" x="1499" y="506" width="10.500" height="10.500"/><use href="#star" x="1510" y="506" width="10.500" height="10.500"/><use href="#star" x="1521" y="506" width="10.500" height="10.500"/><use href="#star" x="1532" y="506" width="10.500" height="10.500"/></g>
<use href="#star" x="1543" y="506" width="10.500" height="10.500" fill="#e8e8e8"/>
<!-- leaderboard -->
<rect x="1452" y="589" width="253" height="262" fill="#fff"/>
<rect x="1452" y="127" width="1" height="898" fill="#ccc"/>
<rect x="1453" y="593" width="252" height="24" fill="url(#gSec)"/><rect x="1453" y="592" width="252" height="1" fill="#ccc"/><rect x="1453" y="617" width="252" height="1" fill="#ccc"/>
<rect x="1601.500" y="622.500" width="99" height="21" rx="3" fill="#f4f4f4" stroke="#ccc"/>
<path d="M1689 631.500l2-2.500 2 2.500zM1689 636l2 2.500 2-2.500z" fill="#555"/>
<rect x="1453" y="670" width="252" height="1" fill="#ccc"/>
<g fill="#efefef"><rect x="1453" y="671" width="251" height="24"/><rect x="1453" y="719" width="251" height="24"/><rect x="1453" y="767" width="251" height="24"/></g>
<use href="#mG" x="1492" y="674" width="11" height="16"/><use href="#mS" x="1492" y="698" width="11" height="16"/><use href="#mB" x="1492" y="722" width="11" height="16"/>
<use href="#arr" x="1684" y="805" width="9" height="9"/>
<!-- news -->
<rect x="1453" y="847" width="252" height="24" fill="url(#gSec)"/><rect x="1453" y="846.500" width="252" height="1" fill="#ccc"/><rect x="1453" y="871" width="252" height="1" fill="#ccc"/>
<path d="M1465 884h6l3 3v8h-9z" fill="#c8c8c8"/><path d="M1471 884v3h3" fill="#eee"/>
<use href="#arr" x="1653" y="992" width="9" height="9"/>
<!-- thermometer -->
<path d="M1462 127v3a16.700 12.500 0 0 0 33.500 0v-3z" fill="#4f4f4f"/>
<rect x="1466" y="79.500" width="25" height="59" rx="12.500" fill="#fff"/>
<rect x="1468" y="82" width="21" height="54" rx="10.500" fill="#e4e4e4"/>
<path d="M1468 109q10.500 1.500 21 0v17a10.500 10.500 0 0 1-21 0z" fill="url(#gXp)"/>
<!-- footer -->
<path d="M27 1025H1705v20a6 6 0 0 1-6 6H33a6 6 0 0 1-6-6z" fill="url(#gFoot)"/><rect x="27" y="1025" width="1678" height="1" fill="#252525"/>
</svg>

<!-- header text -->
<span class="t" style="left:398px;top:85px;font-size:11px;color:#eee">COINS</span>
<span class="t w" style="left:399px;top:100px;font-size:13.500px">114</span>
<span class="t" style="left:1370px;top:86px;font-size:11px;color:#f2f2f2">LEVEL</span>
<span class="t w" style="left:1371px;top:101px;font-size:13.500px">25</span>
<span class="t" style="left:1498px;top:82px;font-size:10.800px;color:#f2f2f2;letter-spacing:.2px">XP TO LEVEL UP</span>
<span class="t w" style="left:1536px;top:104px;font-size:9.600px;color:#e4e4e4;letter-spacing:.4px">9,932 XP</span>
<!-- sidebar text -->
<span class="t" style="left:64px;top:141px;font-size:10.500px;color:#b4b4b4">Search for a Game</span>
<span class="t" style="left:306px;top:141px;font-size:12px;font-weight:bold;color:#666">Prize Shop</span>
<span class="t h" style="top:171px">FEATURES</span>
<span class="t m" style="top:195px">New Games</span>
<span class="t m" style="top:222px">Social</span>
<span class="t m" style="top:249px">My Favorites</span>
<span class="t m" style="top:276px">Achievements</span>
<span class="t m" style="top:303px">Leaderboards</span>
<span class="t m w" style="top:331px;font-size:13.300px;font-weight:bold;color:#fff;text-shadow:0 1px 1px #244d88">Prize Shop</span>
<span class="t h" style="top:354px">GAME CATEGORIES</span>
<span class="t m" style="top:378px">Top Rated</span>
<span class="t m" style="top:405px">All Games</span>
<span class="t m" style="top:432px">Action</span>
<span class="t m" style="top:459px">Adventure</span>
<span class="t m" style="top:486px">Defense</span>
<span class="t m" style="top:513px">Multiplayer</span>
<span class="t m" style="top:540px">Physics</span>
<span class="t m" style="top:567px">Puzzle</span>
<span class="t m" style="top:594px">RPG</span>
<span class="t m" style="top:621px">Sports</span>
<span class="t m" style="top:648px">Strategy</span>
<span class="t m" style="top:675px">Misc</span>
<span class="t" style="left:40px;top:940.500px;font-size:16px;font-weight:bold;color:#fff;transform:translate(-50%,-50%) rotate(-90deg)">Feedback</span>
<!-- panel text -->
<span class="t" style="left:238px;top:197px;font-size:12px;font-weight:bold;color:#555">PRIZE SHOP</span>
<span class="t" style="left:236px;top:244px;font-size:10.800px;color:#d0d0d0;letter-spacing:.3px">SHOPS</span>
<span class="t s" style="top:277px">Pet Shop</span>
<span class="t s" style="top:315px">Snack Shop</span>
<span class="t s" style="top:353px;color:#8d8d8d">Toy Shop</span>
<span class="t" style="left:582px;top:234px;width:200px;text-align:center;font-size:14.300px;font-weight:bold;color:#fff;text-shadow:0 1px 1px #222">Regular Items (6)</span>
<!-- cards row 1 -->
<span class="t ti" style="left:444px;top:457px">Bolts N' Bits</span>
<span class="t ti" style="left:614px;top:457px">Oil Cola</span>
<span class="t ti" style="left:784px;top:457px">Scrap Flakes</span>
<span class="t pr" style="left:466px;top:480px">300 coins</span>
<span class="t pr" style="left:636px;top:480px">750 coins</span>
<span class="t pr" style="left:806px;top:480px">1250 coins</span>
<span class="t pu" style="left:446px;top:515px">Purchase</span>
<span class="t pu" style="left:616px;top:515px">Purchase</span>
<span class="t pu" style="left:786px;top:515px">Purchase</span>
<span class="t ow" style="left:466px;top:547px"><b>You Own:</b> 1</span>
<span class="t ow" style="left:636px;top:547px"><b>You Own:</b> 1</span>
<span class="t ow" style="left:806px;top:547px"><b>You Own:</b> 0</span>
<!-- cards row 2 -->
<span class="t ti" style="left:444px;top:792px">RoboEnergy Drink</span>
<span class="t ti" style="left:614px;top:792px">GummyBots</span>
<span class="t ti" style="left:784px;top:792px">Cogs Crackers</span>
<span class="t pr" style="left:466px;top:815px">1750 coins</span>
<span class="t pr" style="left:636px;top:815px">2250 coins</span>
<span class="t pr" style="left:806px;top:815px">2750 coins</span>
<span class="t pu" style="left:446px;top:850px">Purchase</span>
<span class="t pu" style="left:616px;top:850px">Purchase</span>
<span class="t pu" style="left:786px;top:850px">Purchase</span>
<span class="t ow" style="left:466px;top:882px"><b>You Own:</b> 1</span>
<span class="t ow" style="left:636px;top:882px"><b>You Own:</b> 0</span>
<span class="t ow" style="left:806px;top:882px"><b>You Own:</b> 0</span>
<!-- feed -->
<span class="t sh" style="top:130px">Global Feed</span>
<span class="t f1" style="top:159px"><b>UltimateKanobot</b> rated</span><span class="t f2" style="top:173px">Happy Wheels</span><span class="t f3" style="top:185px">4 minutes ago</span>
<span class="t f1" style="top:212px"><b>UltimateKanobot</b> played</span><span class="t f2" style="top:226px">Happy Wheels</span><span class="t f3" style="top:238px">4 minutes ago</span>
<span class="t f1" style="top:265px"><b>Jogralim</b> played</span><span class="t f2" style="top:279px">Platform Racing 2</span><span class="t f3" style="top:291px">4 minutes ago</span>
<span class="t f1" style="top:318px"><b>TomboKing</b> played</span><span class="t f2" style="top:332px">Platform Racing 2</span><span class="t f3" style="top:344px">7 minutes ago</span>
<span class="t f1" style="top:371px"><b>timteh</b> played</span><span class="t f2" style="top:385px">Super Pig</span><span class="t f3" style="top:397px">11 minutes ago</span>
<span class="t f1" style="top:424px"><b>terel</b> played</span><span class="t f2" style="top:438px">Zombie Pinball</span><span class="t f3" style="top:450px">12 minutes ago</span>
<span class="t f1" style="top:477px"><b>UltimateKanobot</b> rated</span><span class="t f2" style="top:491px">Zombie Pinball</span><span class="t f3" style="top:503px">20 minutes ago</span>
<span class="t f1" style="top:530px"><b>UltimateKanobot</b> commented</span><span class="t f2" style="top:544px">Zombie Pinball</span><span class="t f3" style="top:556px">20 minutes ago</span>
<div style="position:absolute;left:1452px;top:570px;width:253px;height:19px;overflow:hidden"><span class="t f1" style="top:13px;left:47px"><b>UltimateKanobot</b> played</span></div>
<!-- leaderboard -->
<span class="t sh" style="top:595px">Global Leaderboard</span>
<span class="t" style="left:1614px;top:624px;font-size:11px;font-weight:bold;color:#666">Lifetime</span>
<span class="t th" style="left:1465px;top:650px">RANK</span><span class="t th" style="left:1511px;top:650px">NAME</span><span class="t th" style="left:1663px;top:650px">XP</span>
<span class="t rk" style="top:673px">1.</span><span class="t nm" style="top:673px">conesofdeath</span><span class="t xp" style="top:673px">829,731</span>
<span class="t rk" style="top:697px">2.</span><span class="t nm" style="top:697px">SummersJ13</span><span class="t xp" style="top:697px">682,557</span>
<span class="t rk" style="top:721px">3.</span><span class="t nm" style="top:721px">bsmj82</span><span class="t xp" style="top:721px">551,520</span>
<span class="t rk" style="top:745px">4.</span><span class="t nm" style="top:745px">UltimateKanobot</span><span class="t xp" style="top:745px">418,318</span>
<span class="t rk" style="top:769px">5.</span><span class="t nm" style="top:769px">bryceshaffer</span><span class="t xp" style="top:769px">387,354</span>
<span class="t nm" style="left:1602px;top:801px;font-size:10.800px">View full ranking</span>
<!-- news -->
<span class="t sh" style="top:849px">Latest News</span>
<span class="t nw" style="top:881px">We want your feedback to make</span>
<span class="t nw" style="top:900px">KANO/GAMES the best game site</span>
<span class="t nw" style="top:919px">out there! Submit suggestions using</span>
<span class="t nw" style="top:938px">the form in the left corner. Thank you!</span>
<span class="t" style="left:1485px;top:988px;font-size:10.800px;color:#aaa">Feb 23, 2012</span>
<span class="t" style="left:1563px;top:988px;font-size:10.800px;font-weight:bold;color:#3a5a9e">View more news</span>
<!-- footer -->
<span class="t ft" style="left:45px;top:1030px">About</span>
<span class="t ft" style="left:93px;top:1030px">All Games</span>
<span class="t ft" style="left:164px;top:1030px">Developers</span>
<span class="t ft" style="left:240px;top:1030px">Twitter</span>
<span class="t ft" style="left:293px;top:1030px">Facebook Fans</span>
<span class="t ft" style="left:388px;top:1030px">Terms</span>
<span class="t ft" style="left:439px;top:1030px">Privacy Policy</span>
<span class="t ft" style="left:531px;top:1030px">Help</span>
</body></html>
